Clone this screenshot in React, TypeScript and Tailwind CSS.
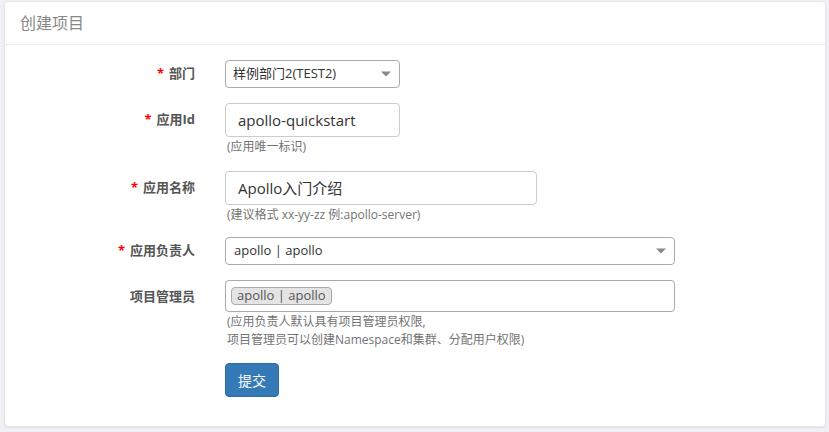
import React from 'react';

const font = { fontFamily: '"Open Sans", "Noto Sans CJK SC", sans-serif' };

const Label: React.FC<{ text: string; required?: boolean }> = ({ text, required = true }) => (
  <div className="w-[205px] shrink-0 pr-[15px] text-right text-[13px] font-bold text-[#555]">
    {required && <span className="text-[#ff0000] mr-[5px]">*</span>}
    {text}
  </div>
);

const Help: React.FC<{ children: React.ReactNode }> = ({ children }) => (
  <div className="text-[12px] leading-[18px] text-[#737373] mt-[1px] pl-[2px]">{children}</div>
);

const Arrow = () => (
  <span className="absolute right-[8px] top-1/2 -translate-y-1/2 w-0 h-0 border-l-[5px] border-r-[5px] border-t-[5px] border-l-transparent border-r-transparent border-t-[#888]" />
);

export default function App() {
  return (
    <div className="w-[829px] h-[432px] bg-[#f0f0f5] pl-[4px] pt-[1px]" style={font}>
      <div className="w-[822px] h-[426px] bg-white rounded-[4px] border border-[#e6e6ec] shadow-[0_1px_2px_rgba(0,0,0,0.08)] flex flex-col">
        {/* Header */}
        <div className="h-[43px] border-b border-[#ececf0] flex items-center pl-[15px]">
          <span className="text-[16px] text-[#888]">创建项目</span>
        </div>

        <div className="flex flex-col pt-[15px]">
          {/* 部门 */}
          <div className="flex items-center">
            <Label text="部门" />
            <div className="pl-[15px]">
              <div className="relative w-[175px] h-[28px] border border-[#aaa] rounded-[4px] flex items-center pl-[7px] text-[13px] text-[#333]">
                样例部门2(TEST2)
                <Arrow />
              </div>
            </div>
          </div>

          {/* 应用Id */}
          <div className="flex items-start mt-[15px]">
            <div className="pt-[7px]"><Label text="应用Id" /></div>
            <div className="pl-[15px]">
              <div className="w-[175px] h-[34px] border border-[#ccc] rounded-[4px] flex items-center pl-[12px] text-[15px] text-[#333]">
                apollo-quickstart
              </div>
              <Help>(应用唯一标识)</Help>
            </div>
          </div>

          {/* 应用名称 */}
          <div className="flex items-start mt-[15px]">
            <div className="pt-[7px]"><Label text="应用名称" /></div>
            <div className="pl-[15px]">
              <div className="w-[312px] h-[34px] border border-[#ccc] rounded-[4px] flex items-center pl-[12px] text-[15px] text-[#333]">
                Apollo入门介绍
              </div>
              <Help>(建议格式 xx-yy-zz 例:apollo-server)</Help>
            </div>
          </div>

          {/* 应用负责人 */}
          <div className="flex items-center mt-[13px]">
            <Label text="应用负责人" />
            <div className="pl-[15px]">
              <div className="relative w-[450px] h-[28px] border border-[#aaa] rounded-[4px] flex items-center pl-[8px] text-[13px] text-[#333]">
                apollo | apollo
                <Arrow />
              </div>
            </div>
          </div>

          {/* 项目管理员 */}
          <div className="flex items-start mt-[15px]">
            <div className="pt-[7px]"><Label text="项目管理员" required={false} /></div>
            <div className="pl-[15px]">
              <div className="w-[450px] h-[32px] border border-[#aaa] rounded-[4px] flex items-center pl-[5px]">
                <span className="h-[18px] px-[5px] flex items-center bg-[#e4e4e4] border border-[#aaa] rounded-[4px] text-[13px] text-[#555]">
                  apollo | apollo
                </span>
              </div>
              <Help>
                (应用负责人默认具有项目管理员权限,
                <br />
                项目管理员可以创建Namespace和集群、分配用户权限)
              </Help>
            </div>
          </div>

          {/* 提交 */}
          <div className="flex mt-[14px]">
            <div className="w-[205px] shrink-0" />
            <div className="pl-[15px]">
              <button className="h-[34px] px-[12px] bg-[#337ab7] border border-[#2e6da4] rounded-[4px] text-white text-[14px]">
                提交
              </button>
            </div>
          </div>
        </div>
      </div>
    </div>
  );
}
